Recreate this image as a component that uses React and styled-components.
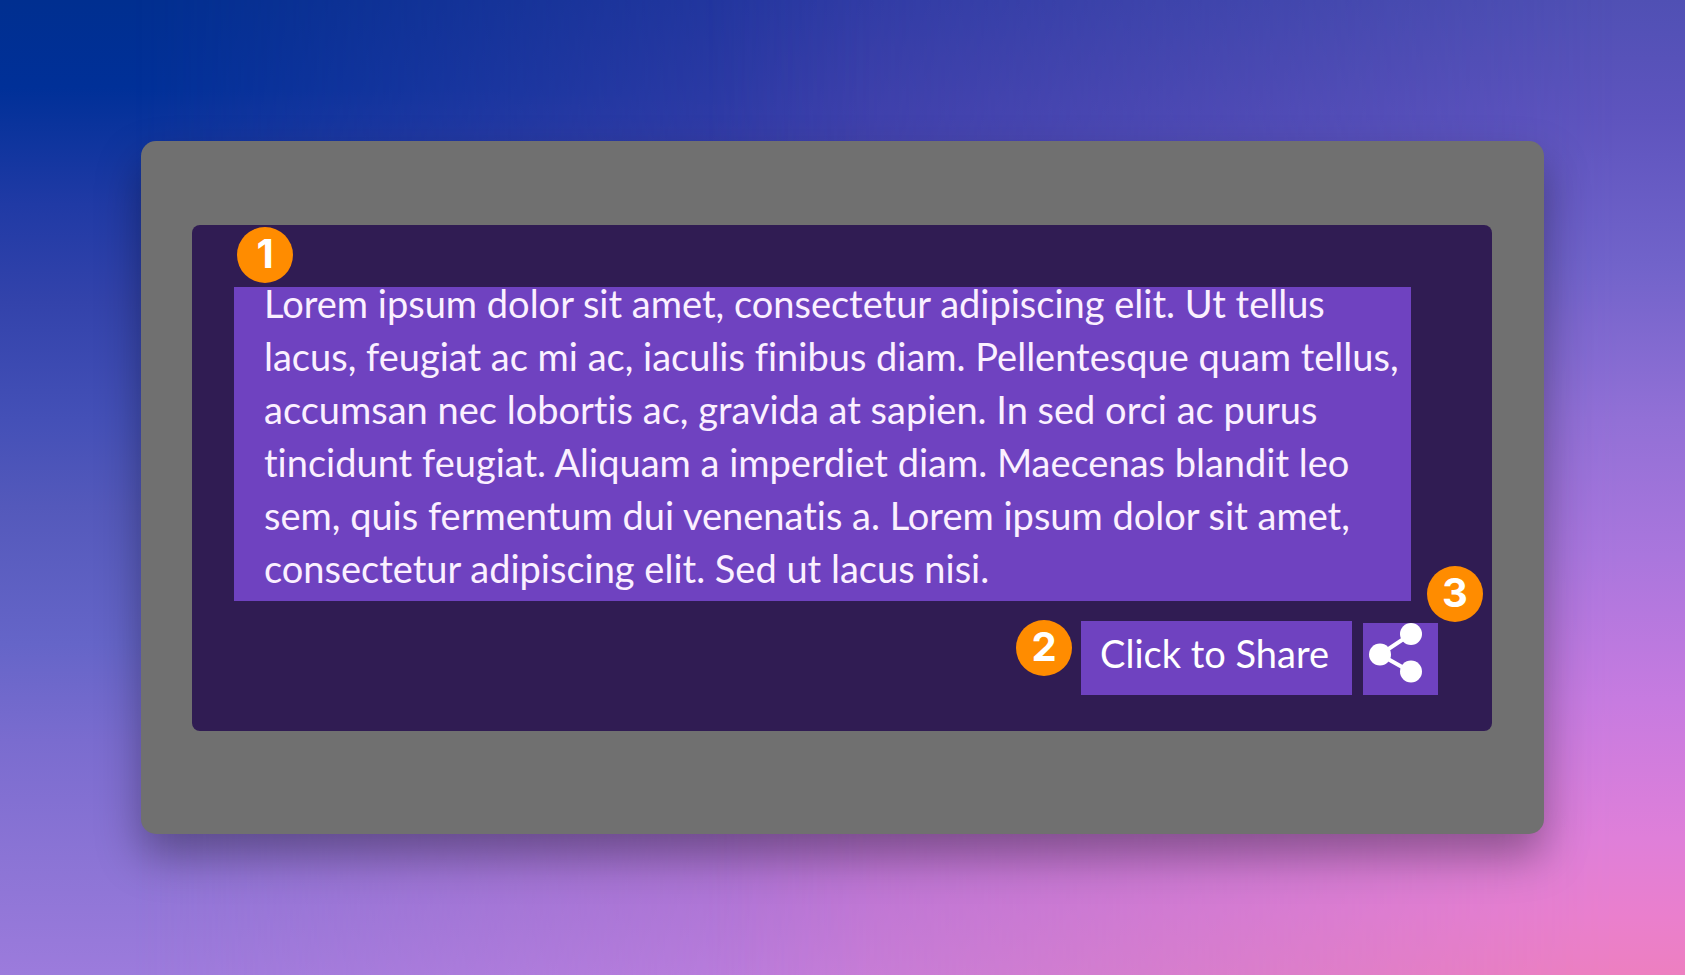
import React from 'react';
import styled, { createGlobalStyle, css } from 'styled-components';

const GlobalStyle = createGlobalStyle`
  *, *::before, *::after { box-sizing: border-box; }
  body { margin: 0; }
`;

const Backdrop = styled.main`
  position: relative;
  isolation: isolate;
  min-height: 100vh;
  padding: 141px;
  font-family: Lato, "Liberation Sans", sans-serif;
  background: linear-gradient(180deg, #002f90 0%, #003098 9%, #203aa5 21%, #3343ab 31%, #4450b7 43%, #5459bb 52%, #6565c8 66%, #7a6ccf 76%, #8b74d5 88%, #9c7bdc 100%);

  &::before,
  &::after {
    content: "";
    position: absolute;
    inset: 0;
    z-index: -1;
  }

  &::before {
    background: linear-gradient(180deg, #2b38a2 0%, #393da8 12%, #8060c8 60%, #b070d0 85%, #bf7cdb 100%);
    mask-image: linear-gradient(90deg, transparent 8%, #000 52%);
  }

  &::after {
    background: linear-gradient(180deg, #5050b4 0%, #5e54be 12%, #7163ca 27%, #9270d6 43%, #aa76dd 57%, #c77be0 72%, #df7fd9 86%, #ea7fcd 94%, #ed7fc0 100%);
    mask-image: linear-gradient(90deg, transparent 42%, #000 96%);
  }
`;

const Frame = styled.section`
  padding: 84px 52px 103px 51px;
  border-radius: 15px;
  background: #707070;
  box-shadow: 0 22px 44px rgba(0, 0, 0, 0.34);
`;

const Card = styled.article`
  padding: 62px 54px 36px 42px;
  border-radius: 8px;
  background: #301c53;
`;

const Quote = styled.div`
  position: relative;
  display: flow-root;
  margin-right: 27px;
  padding: 0 4px 0 30px;
  background: #6f42c0;
`;

const QuoteText = styled.p`
  margin: -10px 0 6px;
  color: #fbf0ff;
  font-size: 38px;
  line-height: 53px;
  font-variant-ligatures: no-common-ligatures;
`;

const Actions = styled.div`
  display: flex;
  justify-content: flex-end;
  align-items: flex-end;
  gap: 11px;
  margin-top: 20px;
`;

const action = css`
  border: 0;
  border-radius: 0;
  background: #6f42c0;
  color: #fff;
  font-family: inherit;
  cursor: pointer;
`;

const ShareButton = styled.button`
  ${action}
  padding: 6px 23px 15px 19px;
  font-size: 38px;
  line-height: 53px;
`;

const IconButton = styled.button`
  ${action}
  display: flex;
  width: 75px;
  height: 72px;
  padding: 0 0 0 6px;
`;

const Anchor = styled.div`
  position: relative;
  display: flex;
`;

const Badge = styled.span`
  position: absolute;
  top: ${(p) => p.$top}px;
  left: ${(p) => p.$left}px;
  width: 56px;
  height: 56px;
  border-radius: 50%;
  background: #ff8c00;
  color: #fff;
  font: 700 40px/54px Inter, "Liberation Sans", sans-serif;
  text-align: center;
`;

const ShareIcon = () => (
  <svg width="54" height="60" viewBox="0 0 54 60" fill="currentColor" aria-hidden="true">
    <path d="M42 11 11 31.500 42 49" fill="none" stroke="currentColor" strokeWidth="4" />
    <circle cx="42" cy="11" r="11" />
    <circle cx="11" cy="31.500" r="11" />
    <circle cx="42" cy="48.500" r="11" />
  </svg>
);

export default function App() {
  return (
    <>
      <GlobalStyle />
      <Backdrop>
        <Frame>
          <Card>
            <Quote>
              <Badge $top={-60} $left={3}>1</Badge>
              <QuoteText>
                Lorem ipsum dolor sit amet, consectetur adipiscing elit. Ut tellus lacus, feugiat ac mi ac,
                iaculis finibus diam. Pellentesque quam tellus, accumsan nec lobortis ac, gravida at sapien.
                In sed orci ac purus tincidunt feugiat. Aliquam a imperdiet diam. Maecenas blandit leo sem,
                quis fermentum dui venenatis a. Lorem ipsum dolor sit amet, consectetur adipiscing elit. Sed
                ut lacus nisi.
              </QuoteText>
            </Quote>
            <Actions>
              <Anchor>
                <Badge $top={-1} $left={-65}>2</Badge>
                <ShareButton type="button">Click to Share</ShareButton>
              </Anchor>
              <Anchor>
                <Badge $top={-57} $left={64}>3</Badge>
                <IconButton type="button" aria-label="Share">
                  <ShareIcon />
                </IconButton>
              </Anchor>
            </Actions>
          </Card>
        </Frame>
      </Backdrop>
    </>
  );
}
